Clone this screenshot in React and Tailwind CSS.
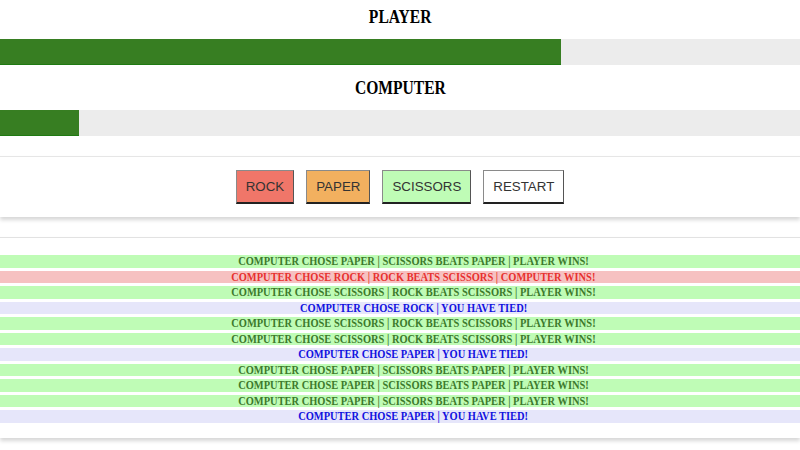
import React from 'react';

const rows = [
  { text: 'COMPUTER CHOSE PAPER | SCISSORS BEATS PAPER | PLAYER WINS!', kind: 'win' },
  { text: 'COMPUTER CHOSE ROCK | ROCK BEATS SCISSORS | COMPUTER WINS!', kind: 'lose' },
  { text: 'COMPUTER CHOSE SCISSORS | ROCK BEATS SCISSORS | PLAYER WINS!', kind: 'win' },
  { text: 'COMPUTER CHOSE ROCK | YOU HAVE TIED!', kind: 'tie' },
  { text: 'COMPUTER CHOSE SCISSORS | ROCK BEATS SCISSORS | PLAYER WINS!', kind: 'win' },
  { text: 'COMPUTER CHOSE SCISSORS | ROCK BEATS SCISSORS | PLAYER WINS!', kind: 'win' },
  { text: 'COMPUTER CHOSE PAPER | YOU HAVE TIED!', kind: 'tie' },
  { text: 'COMPUTER CHOSE PAPER | SCISSORS BEATS PAPER | PLAYER WINS!', kind: 'win' },
  { text: 'COMPUTER CHOSE PAPER | SCISSORS BEATS PAPER | PLAYER WINS!', kind: 'win' },
  { text: 'COMPUTER CHOSE PAPER | SCISSORS BEATS PAPER | PLAYER WINS!', kind: 'win' },
  { text: 'COMPUTER CHOSE PAPER | YOU HAVE TIED!', kind: 'tie' },
];

const rowStyles = {
  win: 'bg-[#bffcb6] text-[#3d7a2c]',
  lose: 'bg-[#f6c1c1] text-[#e8312f]',
  tie: 'bg-[#e6e6fa] text-[#1212e0]',
};

const ScoreBar = ({ label, width }) => (
  <div>
    <h2 className="h-[39px] pb-[5px] flex items-center justify-center">
      <span className="font-['Liberation_Serif',serif] font-bold text-[19px] text-black scale-x-[0.82]">{label}</span>
    </h2>
    <div className="h-[26px] bg-[#ececec]">
      <div className="h-full bg-[#377e22] border-b border-[#1f7a12]" style={{ width }}></div>
    </div>
  </div>
);

const GameButton = ({ label, color }) => (
  <button
    className={`h-[34px] px-[9px] border border-[#8a8a8a] border-b-2 border-b-[#222] border-r-[#555] font-['Liberation_Sans',sans-serif] text-[13.33px] text-[#333] ${color}`}
  >
    {label}
  </button>
);

export default function App() {
  return (
    <div className="w-[800px] h-[450px] bg-white overflow-hidden">
      {/* Scores */}
      <ScoreBar label="PLAYER" width="561px" />
      <div className="h-[6px]"></div>
      <ScoreBar label="COMPUTER" width="79px" />

      {/* Controls */}
      <div className="mt-[20px] h-[61px] border-t border-[#e6e6e6] shadow-[0_3px_4px_rgba(0,0,0,0.16)] flex justify-center items-start pt-[13px] gap-[12px]">
        <GameButton label="ROCK" color="bg-[#f07669]" />
        <GameButton label="PAPER" color="bg-[#f2b05f]" />
        <GameButton label="SCISSORS" color="bg-[#bffcb6]" />
        <GameButton label="RESTART" color="bg-white" />
      </div>

      {/* Log */}
      <div className="mt-[20px] h-[201px] border-t border-[#e2e2e2] shadow-[0_3px_4px_rgba(0,0,0,0.16)] pt-[17px] flex flex-col gap-[3px]">
        {rows.map((row, i) => (
          <div
            key={i}
            className={`h-[12.5px] pl-[27px] flex items-center justify-center ${rowStyles[row.kind]}`}
          >
            <span className="font-['Liberation_Serif',serif] font-bold text-[12px] leading-none whitespace-nowrap scale-x-[0.87]">
              {row.text}
            </span>
          </div>
        ))}
      </div>
    </div>
  );
}
